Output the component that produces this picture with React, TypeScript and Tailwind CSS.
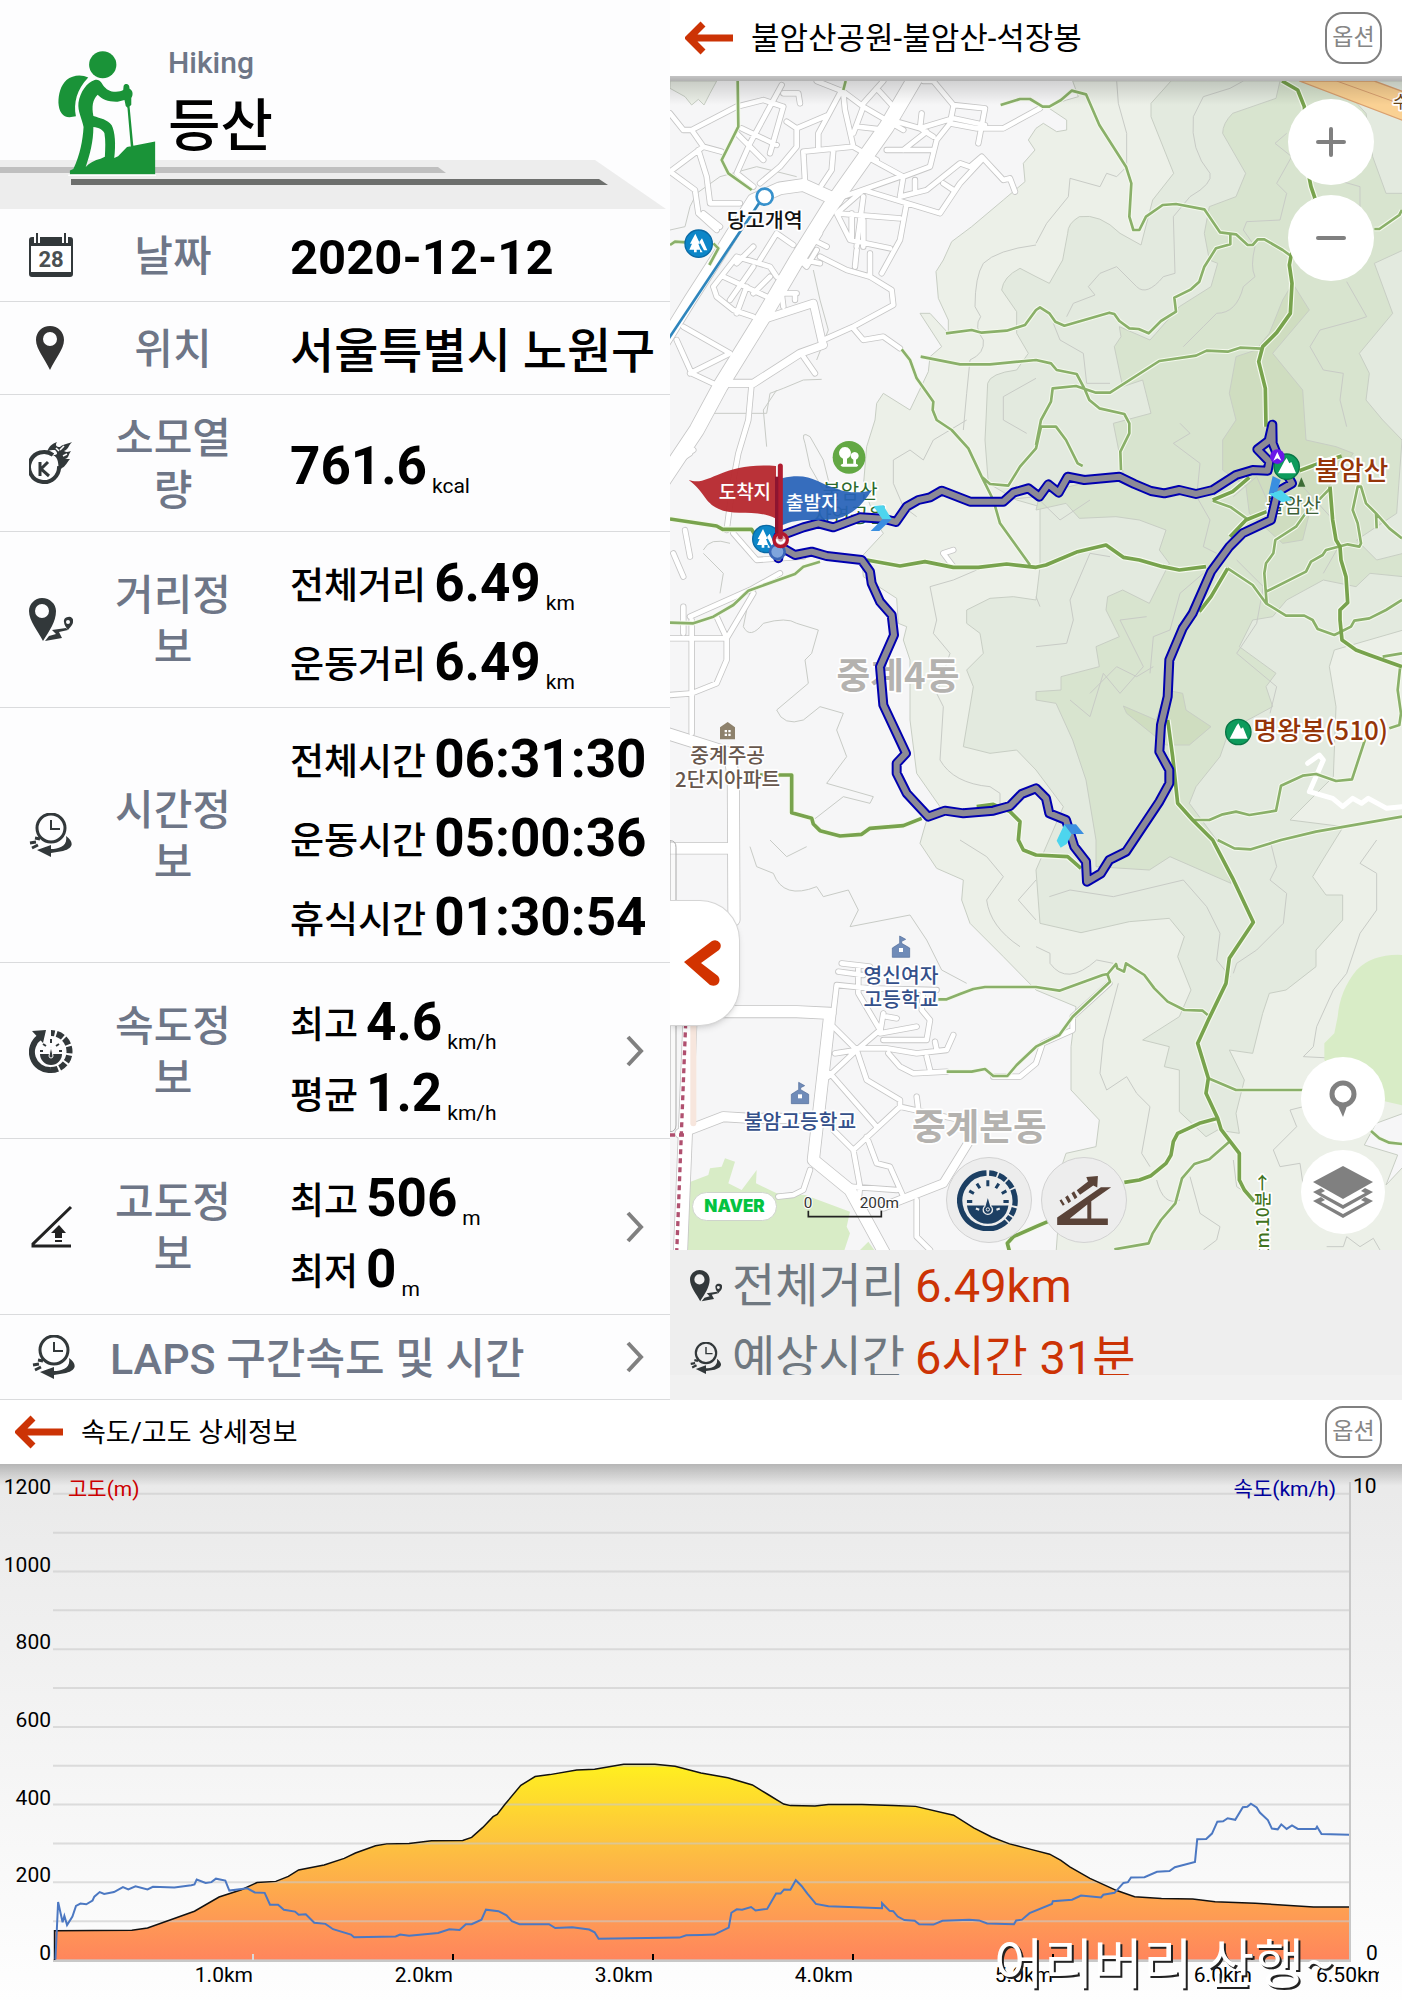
/**
 * Hiking record screen.
 * - Summary table of the workout (left)
 * - Map with the recorded route (right)
 * - Speed / altitude chart (bottom)
 */
import type { ReactNode } from 'react'

interface Measure {
  label?: string
  value: string
  unit?: string
}

const DISTANCE: Measure[] = [
  { label: '전체거리', value: '6.49', unit: 'km' },
  { label: '운동거리', value: '6.49', unit: 'km' },
]

const TIMES: Measure[] = [
  { label: '전체시간', value: '06:31:30' },
  { label: '운동시간', value: '05:00:36' },
  { label: '휴식시간', value: '01:30:54' },
]

const SPEED: Measure[] = [
  { label: '최고', value: '4.6', unit: 'km/h' },
  { label: '평균', value: '1.2', unit: 'km/h' },
]

const ALTITUDE: Measure[] = [
  { label: '최고', value: '506', unit: 'm' },
  { label: '최저', value: '0', unit: 'm' },
]

/* ---------- Icons ---------- */

function HikerIcon() {
  return (
    <svg viewBox="136 150 230 362" preserveAspectRatio="none" className="h-[125px] w-[98px]" fill="#1a9338" aria-hidden="true">
      <ellipse cx="241" cy="190" rx="32" ry="39" />
      <path d="M207 227C192 217 170 219 156 234C142 250 137 275 137 300C138 325 147 342 163 342L178 339C172 300 180 262 207 227Z" />
      <path d="M222 234C204 241 188 268 184 300C182 325 192 345 196 370C194 410 188 450 172 492L164 496V507H364V412L298 428L277 455L268 460C272 420 270 385 262 365C252 348 236 345 219 338C215 312 217 292 229 277C240 291 255 298 276 297L292 292L295 309L299 314L307 428H313L304 311L308 306V286C313 276 312 264 304 259L303 251C300 244 292 244 290 251L289 263C283 268 273 269 262 267C250 263 244 254 238 242C234 234 228 232 222 234ZM219 370C232 372 242 378 245 388C248 410 247 432 246 456L236 462C222 466 209 475 201 486C211 450 219 412 219 370Z" />
      <rect x="160" y="508" width="206" height="4" fill="#fff" />
    </svg>
  )
}

function CalendarIcon() {
  return (
    <svg viewBox="0 0 44 44" className="size-11" aria-hidden="true">
      <rect x="1" y="5" width="42" height="38" rx="2" fill="#fff" stroke="#32383a" strokeWidth="2" />
      <path d="M1 5h42v8H1zM1 39h42v4H1z" fill="#32383a" />
      <path d="M8 1v9M36 1v9" stroke="#fdfdfe" strokeWidth="6" />
      <path d="M8 0v10M36 0v10" stroke="#32383a" strokeWidth="2" />
      <text x="22" y="34" textAnchor="middle" fontSize="22" fontWeight="700" fill="#4a5052">
        28
      </text>
    </svg>
  )
}

function PinIcon() {
  return (
    <svg viewBox="0 0 44 44" className="size-11" aria-hidden="true">
      <path fill="#333" fillRule="evenodd" d="M21 0C13 0 7 6 7 14c0 9 9 19 14 30 5-11 14-21 14-30 0-8-6-14-14-14Zm0 6a7 7 0 1 1 0 14 7 7 0 0 1 0-14Z" />
    </svg>
  )
}

function CalorieIcon() {
  return (
    <svg viewBox="0 0 44 44" className="size-11" aria-hidden="true">
      <path d="M24 14A15 15 0 1 0 30 25" fill="none" stroke="#32383a" strokeWidth="4" />
      <path
        d="M18 11C20 5 23 3 28 1C26 4 27 6 31 6C34 3 38 3 43 1C39 5 40 8 35 10C38 12 41 10 42 10C39 14 40 17 36 18L41 18C38 21 37 25 33 27L30 30C29 23 30 17 24 14C29 14 29 12 26 9C23 9 20 9 18 11Z"
        fill="#32383a"
      />
      <path d="M31 9L35 5M34 15L38 13M27 7l3 3" stroke="#fdfdfe" strokeWidth="1.6" />
      <path d="M11 21v14M19 21l-7 7 8 7" fill="none" stroke="#32383a" strokeWidth="3" />
    </svg>
  )
}

function RouteIcon({ className }: { className: string }) {
  return (
    <svg viewBox="0 0 44 44" className={className} aria-hidden="true">
      <path fill="#32383a" fillRule="evenodd" d="M13 0C6 0 0 6 0 13c0 10 9 20 14 30 6-10 13-19 13-30C27 6 21 0 13 0Zm0 6a7 7 0 1 1 0 14 7 7 0 0 1 0-14Z" />
      <path fill="#32383a" fillRule="evenodd" d="M39 19a4 4 0 0 0-4 5c0 3 2 5 4 8 2-3 5-5 5-8a4 4 0 0 0-5-5Zm0 3a2 2 0 1 1 0 4 2 2 0 0 1 0-4Z" />
      <path d="M16 43L20 38L27 36L23 32L37 30L39 32L30 34L33 40Z" fill="#32383a" />
    </svg>
  )
}

function TimeIcon({ className }: { className: string }) {
  return (
    <svg viewBox="0 0 44 44" className={className} aria-hidden="true">
      <ellipse cx="22" cy="15" rx="14" ry="14" fill="none" stroke="#32383a" strokeWidth="3" />
      <path d="M22 7v9h9" fill="none" stroke="#32383a" strokeWidth="2" />
      <path d="M37 23C45 29 45 35 34 38L22 40V44L8 37L22 32V36C30 36 39 33 37 23Z" fill="#32383a" />
      <path d="M6 25l5 1M1 30l6-1M3 35l6-3" stroke="#32383a" strokeWidth="3" />
    </svg>
  )
}

function SpeedIcon() {
  return (
    <svg viewBox="0 0 44 44" className="size-11" aria-hidden="true">
      <path d="M11 8A18 18 0 0 0 22 41" fill="none" stroke="#32383a" strokeWidth="6" />
      <path d="M22 41A18 18 0 1 0 22 4" fill="none" stroke="#32383a" strokeWidth="6" strokeDasharray="7 2" />
      <path d="M3 2L17 1L14 14Z" fill="#32383a" />
      <path d="M11 25H33A11 11 0 0 1 11 25Z" fill="#32383a" />
      <path d="M11 22h3M30 22h3M14 15l3 2M30 15l-3 2M22 10v4" stroke="#32383a" strokeWidth="2" />
      <path d="M22 17l2 10a2 2 0 1 1-4 0Z" fill="#32383a" stroke="#fdfdfe" />
    </svg>
  )
}

function SlopeIcon() {
  return (
    <svg viewBox="0 0 44 44" className="size-11" aria-hidden="true">
      <path d="M42 2L4 39V41H42" fill="none" stroke="#222" strokeWidth="3" />
      <path d="M30 20l7 8h-4v5h-7v-5h-4zM26 35h7v2h-7z" fill="#222" />
    </svg>
  )
}

function ChevronIcon() {
  return (
    <svg viewBox="0 0 18 32" className="h-8 w-[18px]" aria-hidden="true">
      <path d="M2 2L15 16L2 30" fill="none" stroke="#808080" strokeWidth="4" />
    </svg>
  )
}

function BackArrow() {
  return (
    <svg viewBox="0 0 48 34" className="h-[34px] w-12" aria-hidden="true">
      <path d="M18 3L4 17L18 31M5 17H48" fill="none" stroke="#cc3305" strokeWidth="7" />
    </svg>
  )
}

function GaugeIcon() {
  return (
    <svg viewBox="866 988 190 182" className="h-[61px] w-[63px]" aria-hidden="true">
      <path d="M955 996A84 84 0 1 0 1015 1142" fill="none" stroke="#1c3f63" strokeWidth="16" />
      <path d="M963 996A84 84 0 0 1 1018 1138" fill="none" stroke="#1c3f63" strokeWidth="16" strokeDasharray="24 5 26 5 26 5 50 6" />
      <path d="M896 1094H1021A63 63 0 0 1 896 1094Z" fill="#1c3f63" />
      <path d="M896 1082h16M1006 1082h16M903 1050l14 8M1015 1050l-14 8M926 1028l9 14M992 1028l-9 14M959 1018v18" stroke="#1c3f63" strokeWidth="9" />
      <path d="M959 1064l9 32a14 14 0 1 1-18 0Z" fill="#1c3f63" stroke="#ededed" strokeWidth="4" />
      <circle cx="959" cy="1106" r="5" fill="none" stroke="#ededed" strokeWidth="3" />
      <path d="M923 1103l10 4M995 1103l-10 4" stroke="#ededed" strokeWidth="6" />
    </svg>
  )
}

function InclineIcon() {
  return (
    <svg viewBox="60 990 168 154" className="h-[51px] w-14" fill="#5a4338" aria-hidden="true">
      <path fillRule="evenodd" d="M63 1141V1118L195 1027H226L166 1069V1121H216V1141ZM101 1121H154V1079Z" />
      <path d="M122 1036L156 1010L151 996L186 993L184 1028L172 1022L132 1050ZM106 1045l8-6 10 18-8 6zM87 1057l8-6 10 18-8 6zM70 1067l6-4 10 16-6 4z" />
    </svg>
  )
}

/* ---------- Summary ---------- */

function MeasureLine({ label, value, unit, height }: Measure & { height: string }) {
  return (
    <p className={`flex items-baseline whitespace-nowrap ${height}`}>
      {label && <span className="mr-2 self-start pt-[3px] text-[37px] font-medium">{label}</span>}
      <span className="text-[53px] font-bold">{value}</span>
      {unit && <sub className="bottom-[-9px] ml-[5px] text-[21px] leading-none">{unit}</sub>}
    </p>
  )
}

function Row({
  icon,
  label,
  padding,
  more,
  children,
}: {
  icon: ReactNode
  label: string
  padding: string
  more?: boolean
  children: ReactNode
}) {
  return (
    <div className={`grid grid-cols-[102px_142px_1fr_auto] items-center border-b border-[#dadbdd] ${padding}`}>
      <div className="flex justify-center">{icon}</div>
      <h2 className="pt-[6px] pb-[2px] text-center text-[42px] leading-[52px] font-medium text-[#6e7687]">{label}</h2>
      <div className="min-w-0 pl-[46px] text-black">{children}</div>
      {more && (
        <button type="button" aria-label={`${label} 상세보기`} className="mr-[26px] cursor-pointer">
          <ChevronIcon />
        </button>
      )}
    </div>
  )
}

function Summary() {
  return (
    <section className="bg-[#fdfdfe]">
      <div className="relative h-[209px]">
        <svg viewBox="0 0 670 209" preserveAspectRatio="none" className="absolute inset-0 size-full" aria-hidden="true">
          <path d="M0 160H595L666 209H0Z" fill="#ededed" />
          <path d="M0 167H438L446 173H0Z" fill="#bfbfbf" />
          <path d="M71 179H599L608 185H71Z" fill="#6d6f6d" />
        </svg>
        <div className="relative flex gap-3 pt-[51px] pl-[58px]">
          <HikerIcon />
          <div className="-mt-2">
            <p className="text-[30px] leading-10 font-medium text-[#6e7687]">Hiking</p>
            <h1 className="text-[57px] leading-[88px] font-medium text-black">등산</h1>
          </div>
        </div>
      </div>

      <Row icon={<CalendarIcon />} label="날짜" padding="py-4">
        <p className="pt-[6px] text-[49px] leading-[52px] font-bold">2020-12-12</p>
      </Row>
      <Row icon={<PinIcon />} label="위치" padding="py-4">
        <p className="pt-[8px] text-[48px] leading-[52px] font-medium whitespace-nowrap">서울특별시 노원구</p>
      </Row>
      <Row icon={<CalorieIcon />} label="소모열량" padding="py-3">
        <div className="pt-[6px]">
          <MeasureLine value="761.6" unit="kcal" height="h-[79px] leading-[79px]" />
        </div>
      </Row>
      <Row icon={<RouteIcon className="size-11" />} label="거리정보" padding="py-[5px]">
        <div className="pt-[7px]">
          {DISTANCE.map((m) => (
            <MeasureLine key={m.label} {...m} height="h-[79px] leading-[79px]" />
          ))}
        </div>
      </Row>
      <Row icon={<TimeIcon className="size-11" />} label="시간정보" padding="py-[5px]">
        <div className="pt-[7px]">
          {TIMES.map((m) => (
            <MeasureLine key={m.label} {...m} height="h-[79px] leading-[79px]" />
          ))}
        </div>
      </Row>
      <Row icon={<SpeedIcon />} label="속도정보" padding="py-[9px]" more>
        <div className="pt-[15px]">
          {SPEED.map((m) => (
            <MeasureLine key={m.label} {...m} height="h-[71px] leading-[71px]" />
          ))}
        </div>
      </Row>
      <Row icon={<SlopeIcon />} label="고도정보" padding="py-[9px]" more>
        <div className="pt-[15px]">
          {ALTITUDE.map((m) => (
            <MeasureLine key={m.label} {...m} height="h-[71px] leading-[71px]" />
          ))}
        </div>
      </Row>
      <button
        type="button"
        className="flex w-full cursor-pointer items-center border-b border-[#dadbdd] py-[14px] pr-[26px] pl-8 text-left"
      >
        <TimeIcon className="size-11" />
        <span className="ml-[34px] flex-1 pt-1 text-[43px] leading-[52px] font-medium whitespace-nowrap text-[#6e7687]">
          LAPS 구간속도 및 시간
        </span>
        <ChevronIcon />
      </button>
    </section>
  )
}

/* ---------- Map ---------- */

const ROADS: { d: string; w: number }[] = [
  { w: 44, d: 'M750 210L650 380L480 620L380 780L280 950L150 1160L80 1290L-20 1440' },
  { w: 36, d: 'M500 600L400 555L330 565L250 600L150 760L60 900L-20 1030' },
  { w: 34, d: 'M-10 2200L180 2260L190 2340L192 2760' },
  { w: 32, d: 'M0 2545H190' },
  { w: 34, d: 'M150 3035H380L480 3040L430 3480L540 3570L660 3790' },
  { w: 40, d: 'M60 3060L30 3790' },
  { w: 28, d: 'M30 3400L160 3350L240 3355H430' },
  { w: 24, d: 'M640 3620L820 3550L900 3420' },
  {
    w: 14,
    d:
      'M0 340L40 390H65L100 440L0 515M65 390L200 320L280 300L340 320M100 440L155 455M85 450L110 530L120 610H210' +
      'M0 515L75 570L85 640L140 690M100 640L150 680M335 255L240 430L200 520L250 560M340 280H385L390 310M340 320L300 460' +
      'M200 400L280 480M215 385L320 435M350 365L380 385V440L330 500L270 550M380 385L475 345L515 270M475 345L445 400V450' +
      'M400 455L550 440L620 480M550 440L525 330L520 280M440 243L520 275L580 320L700 390M580 320L550 400M620 265L670 320M640 243L580 310' +
      'M680 365L750 385L850 355L945 375M755 340L750 385L790 410M760 243H790L850 315L945 325L925 430M850 320L840 370L800 420L780 500L700 530' +
      'M840 370L920 385H1000L1110 325M560 380L650 390M650 450H790M770 395L700 450M590 470L700 530L690 590M520 590L690 530' +
      'M490 450L485 510L455 555M400 455L405 545M500 640L580 570L810 640L870 550L935 480M690 590L770 570L870 490L900 500L935 470L1000 540L1020 535L1035 575' +
      'M735 540V570M820 550L850 570M580 590L560 740M500 640L690 655M500 640L540 720L660 745M545 640V720M580 660V740M560 750L555 800M600 760V830' +
      'M710 610L690 720L635 820M450 700L400 780L450 790M380 770L410 800L440 750M430 720L470 740M320 700L270 780M320 700L370 735' +
      'M450 770L530 810L600 830L665 870L670 915L550 980L460 1020M130 860L200 770L300 800L320 830M250 740L200 790M130 860L140 890L190 930L250 950' +
      'M160 830L290 890M180 900L250 800M230 860L200 940M300 830L250 880M330 880H380M340 920L335 880M375 900V880' +
      'M40 980L180 1060M20 1020L65 1120L150 1160M60 1120L180 1060M400 1070L435 1120M245 1150L235 1260L205 1360L190 1440L170 1590' +
      'M550 985L580 1020L640 1010L690 1045M0 1400L60 1360M20 1380L70 1350M10 1660L40 1730M45 1590L60 1670M65 1860V2200' +
      'M0 1915H170M250 1780L170 1915V1980L140 2050L65 2080L0 2085M140 1850L170 1915M60 1850L240 1770L330 1720M40 1820V1900M190 1600L260 1680L400 1670' +
      'M820 1660L850 1700M820 1660L850 1650' +
      'M490 3040L500 2955L600 2965L800 2970M515 2890L600 2900M505 2915L580 2925M565 2900V2980L630 3090L560 3150L475 3230' +
      'M640 3040L630 3100L740 3080M650 3050L680 3055M560 3145H650L740 3160L830 3150L850 3105M495 3160L560 3150M490 3080L560 3150L590 3240L690 3300V3320L550 3450L490 3390' +
      'M480 3220L620 3380M640 3120H770L780 3060L755 3030L760 2970M655 3160L690 3200L730 3220L830 3215M770 3170L780 3210M795 3125L800 3150' +
      'M740 3290L745 3330M690 3320L870 3360M590 3410L620 3490L660 3500L700 3590M550 3450L570 3560L565 3610M540 3560L680 3570' +
      'M740 3600V3710L780 3750M325 3590L370 3585L400 3570L420 3510M970 3230H1050L1098 3190L1118 3130L1208 3090V3050L1318 2950',
  },
  { w: 22, d: 'M275 960L430 910L455 1020L460 1035L390 1060L250 1150L165 1150' },
]

const CONTOURS =
  'M0 690L45 680L60 620L80 580L150 530L260 500L380 530M0 1390L100 1240L290 1240L300 1180L340 1165L400 1140L455 1138M290 1340L280 1230L320 1170M430 810L450 900L475 990L440 1080' +
  'M1098 735Q980 750 940 790Q915 830 915 920L932 950Q910 980 940 1020Q945 1060 900 1080L890 1180L880 1290' +
  'M1098 1135L1000 1190V1260L1070 1300M1340 243L1345 310L1370 400L1370 500L1340 530L1310 520L1290 560L1200 535L1195 590L1130 670L1098 730' +
  'M1720 243L1680 265L1600 290L1570 350Q1560 450 1620 520Q1630 550 1560 590L1510 650L1515 820L1480 830Q1430 890 1400 860L1340 800L1290 820L1255 860L1275 885L1210 910L1190 950' +
  'M1850 400L1815 430L1865 470L1820 550L1850 580L1830 660L1730 665L1720 690L1755 740Q1740 800 1755 830L1720 860Q1700 940 1640 940L1600 980L1540 1040' +
  'M1150 970L1170 1020L1240 1060L1250 1150L1320 1150M1000 1500L1098 1490L1170 1560L1260 1500M1530 1270L1560 1300L1510 1330L1590 1390L1580 1490L1620 1560L1600 1640L1640 1660' +
  'M2030 845L2090 950L2060 960L1950 990L1920 1040L1960 1110L2020 1120L2010 1200L2030 1280M2000 540L2070 560L2070 640M1430 1850L1350 1860L1420 2000L1350 2080L1300 2020L1260 2150L1200 2100' +
  'M1700 1680L1780 1760L1760 1870L1700 1960L1820 2060L1800 2140M1690 1490L1760 1430L1800 1520M1880 1440L1990 1560L2000 1650L1960 1720' +
  'M405 1330Q390 1290 420 1310L460 1380L500 1540L420 1400ZM670 1380L720 1350L760 1380L790 1320L890 1260M670 1380V1450L700 1520L740 1550M100 1650Q120 1610 180 1630' +
  'M150 1780L160 1720L100 1660M240 1780L220 1880Q240 1920 280 1870Q350 1850 380 1870L445 1890L425 1960L405 1980L415 2050L320 2130Q340 2180 400 2160L450 2120L520 2140L500 2190L530 2270L470 2350L610 2390L600 2410L520 2390L430 2460' +
  'M780 1760L850 1740L920 1710M780 1760L800 1860L790 1900L840 1960L800 2080L820 2120L810 2280Q850 2350 960 2360L990 2380V2440M240 2540L260 2600L310 2620Q340 2700 440 2660L460 2690L535 2670L565 2730L540 2780L720 2745L770 2820L815 2910L890 2950' +
  'M300 2520L350 2570L410 2540M870 2520L950 2570L1000 2630L950 2700Q960 2780 1050 2840M1098 2640L1045 2700L1098 2760' +
  'M1138 2690L1200 2670L1330 2690L1540 2640L1610 2720L1650 2800L1640 2880L1680 2930M1098 2840L1140 2860V2890Q1190 2960 1280 2880L1330 2890M1345 2950L1300 3120L1290 3220L1310 3270L1370 3230L1400 3280L1440 3320L1415 3460L1440 3500' +
  'M1800 2520L1820 2600L1800 2640L1850 2680L1840 2770L1760 2850L1700 2890L1690 2920M2120 2520L2070 2590L2120 2620V2730L2070 2800L2030 2920L1990 2970L1940 3080L1930 3140L1900 3170L2000 3175' +
  'M1900 3320L1860 3330L1880 3380L1810 3450L1830 3500L1890 3490L1900 3560M1460 3540Q1480 3620 1530 3600M1560 3530L1590 3640L1650 3680L1640 3720L1600 3750M1690 3480L1700 3560L1760 3600M1970 3740L2020 3740L2030 3710L2070 3740L2110 3715L2130 3750' +
  'M1098 1790L1110 1820M1098 1940L1190 1930L1210 1860L1200 1800L1260 1660L1320 1670M1440 2020L1450 1910L1500 1890L1530 1780L1600 1720M1260 2080L1340 2000L1400 2030L1450 2000'

const TRAILS =
  'M203 243L205 380L155 480L175 520L245 570M0 735L15 725L60 728M130 730L145 745L118 795M520 270L527 243' +
  'M992 315L1050 297H1080L1118 320H1138L1173 300L1205 272L1248 283L1288 375L1368 500L1384 550L1378 650L1390 690H1408L1428 650L1478 615L1518 612L1603 628L1650 697L1698 703L1733 735H1748L1763 718H1783L1838 750L1863 768' +
  'M1681 700V733L1638 745L1603 800L1588 845L1563 868L1513 893L1518 935L1473 963L1436 1000L1406 987L1378 985L1348 963L1333 942L1318 938L1183 977L1156 965L1138 940L1110 922L1098 930L1065 975L1010 992L935 998L905 990L828 1000' +
  'M752 1070L870 1093H960L1098 1080L1143 1090L1160 1110L1220 1122L1243 1165L1258 1200L1288 1225L1363 1242L1378 1270V1300L1351 1355L1353 1410' +
  'M1098 1335L1113 1260L1143 1205L1148 1165L1218 1158L1278 1178H1320L1468 1083L1578 1067L1610 1052L1673 1055L1710 1043L1773 1046' +
  'M695 1048L720 1080L740 1135L790 1205L788 1230L800 1260L845 1290L895 1345L935 1430L970 1500L990 1570L1080 1695M935 1430L960 1452L1015 1457L1050 1400L1098 1345L1113 1280H1158L1188 1320L1223 1390L1238 1398' +
  'M0 1868L70 1870L130 1850L190 1815L235 1772L375 1722L400 1700L450 1685' +
  'M805 2998H830L870 2982L910 2967L945 2961H1098L1168 2972L1298 2925L1313 2922L1338 2892L1342 2905L1362 2915L1368 2890L1423 2925L1453 2965L1493 3005L1543 3030L1598 3032L1613 3045' +
  'M1313 2925L1320 2945L1208 3050L1168 3105L1098 3140L1040 3195L1012 3228H970L945 3207L905 3215H830' +
  'M1678 3425L1618 3478L1573 3492L1536 3535L1516 3610L1473 3660L1448 3700L1436 3730L1333 3748M1615 3235L1698 3270H1900' +
  'M1643 2520L1693 2545L1743 2548L1833 2520L1938 2495L2196 2450M2103 3393L2128 3415L2158 3428L2196 3432' +
  'M1568 2460H1618L1658 2443L1698 2435L1738 2445L1818 2432L1833 2357L1898 2327L1938 2322L1998 2343L2046 2338L2088 2210M2158 2185L2188 2175L2193 2140L2183 2070L2190 2005' +
  'M1673 1705L1748 1755L1788 1810L1848 1847H1903L1928 1860L1943 1887L1993 1905L2043 1880L2053 1862L2098 1855L2148 1830L2196 1800' +
  'M1788 1775L1908 1715L1923 1685L1958 1665L1968 1650L2033 1633L2068 1640L2073 1630L2063 1570L2048 1530L2063 1460H2073L2088 1510L2118 1540L2158 1585L2196 1615M2118 1540L2120 1585' +
  'M1790 1810L1783 1720L1788 1690L1810 1660L1816 1620L1878 1580L1903 1545L1980 1465M1628 1502L1683 1522L1733 1558M2138 1970L2196 1960M2113 687H2128L2188 645L2196 630'

const MAIN_TRAILS =
  'M0 1557L140 1578L158 1588H245L255 1605M590 1680L690 1698L765 1685L850 1702H925L1010 1692L1098 1702L1128 1695L1223 1655L1308 1635L1360 1672L1408 1680L1478 1700L1528 1710L1608 1700' +
  'M270 2325H365V2438L425 2455L430 2472L450 2492L510 2508L575 2503L600 2485L700 2477L755 2455M920 2420L970 2413L1020 2435L1050 2465L1045 2520L1060 2550L1098 2565L1193 2570L1233 2605' +
  'M1493 2160L1508 2270L1523 2410L1568 2460L1628 2520L1688 2635L1750 2767L1678 2875L1668 2950L1615 3060L1583 3130L1615 3235L1608 3280L1643 3355L1653 3388L1708 3460V3540L1723 3570L1753 3605' +
  'M1643 3355L1588 3370L1523 3400L1510 3425L1503 3465L1488 3490L1443 3527L1408 3540L1363 3547M1020 3760L1012 3730L1030 3710L1098 3680L1140 3662' +
  'M1836 243L1883 270L1903 320L1918 535L1923 560L1935 595L1863 768L1858 795L1866 850L1861 940L1820 998L1778 1040L1766 1085L1786 1165L1788 1280' +
  'M1980 1460L1988 1560L1998 1620L2010 1640L2013 1680L2028 1730L2033 1808L2010 1830V1860L2016 1920L2058 1950L2098 1965L2196 2000' +
  'M1888 1412L1948 1390L2015 1368M1628 1500L1688 1475L1738 1432M1790 1535L1728 1560L1680 1610M1673 1705L1623 1790L1588 1835'

const ROUTE =
  'M325 1675V1610L400 1582L445 1570L490 1582L570 1552L640 1556L678 1566L710 1520L745 1500L780 1492L815 1472L900 1505H1000L1030 1478L1075 1465L1108 1490L1135 1453L1166 1478L1193 1430L1243 1440L1348 1430L1393 1452L1443 1473L1483 1480L1528 1470L1578 1482L1628 1470L1698 1425L1748 1410L1793 1412L1798 1385L1762 1348L1796 1322L1807 1274L1808 1330L1828 1380' +
  'L1866 1450L1823 1475L1803 1560L1718 1600L1678 1640L1623 1715L1568 1840L1538 1885L1498 1980L1493 2090L1473 2175L1468 2255L1498 2310V2350L1468 2405L1398 2510L1368 2555L1318 2580L1293 2620L1251 2645L1248 2585L1213 2540L1188 2460L1138 2440L1128 2395L1098 2365L1055 2382L1020 2418L970 2432L880 2440L825 2432L775 2450L710 2380L680 2320V2290L708 2260L640 2115L630 2000L672 1905L665 1845L630 1805L605 1750L600 1715L575 1680L470 1668L425 1655L375 1665L340 1645'

function TreeMarker({ x, y }: { x: number; y: number }) {
  return (
    <g transform={`translate(${x} ${y})`}>
      <circle r="41" fill="#0c86c8" stroke="#0a69a4" strokeWidth="4" />
      <path d="M-10-30L-26 0H-20L-28 18H-14V26H-6V18H6L-1 0H4ZM10-16L2-6L16 20H26ZM4 14v12h8z" fill="#fff" />
    </g>
  )
}

function PeakMarker({ x, y }: { x: number; y: number }) {
  return (
    <g transform={`translate(${x} ${y})`}>
      <circle r="38" fill="#0d9b5c" stroke="#087545" strokeWidth="4" />
      <path d="M-26 20L-6-18L0-26L8-10L14-14L28 20Z" fill="#fff" />
    </g>
  )
}

function SchoolMarker({ x, y }: { x: number; y: number }) {
  return (
    <g transform={`translate(${x} ${y})`}>
      <path d="M-26 30V2L-4-12V-34L14-24L2-18V-12L26 2V30Z" fill="#6f8bb8" stroke="#4f6a98" strokeWidth="2" />
      <rect x="-6" y="2" width="12" height="12" fill="#fff" />
    </g>
  )
}

function MapCanvas() {
  return (
    <svg
      viewBox="0 243 2196 3507"
      preserveAspectRatio="xMidYMid slice"
      className="absolute inset-0 size-full font-['Noto_Sans_CJK_KR',sans-serif]"
      role="img"
      aria-label="불암산 등산 경로 지도"
    >
      <rect y="243" width="2196" height="3507" fill="#f6f6f7" />

      {/* Terrain, from the foot of the mountain up */}
      <g stroke="#c8cec4" strokeWidth="3" strokeLinejoin="round">
        <path d="M0 243H140L120 280L102 315L85 298L65 315L45 290L0 265Z" fill="#ecf0e8" />
        <path
          d="M1208 243L1225 290L1190 300L1130 320L1190 360V390L1160 395L1120 370L1098 385L1075 420L1095 450L1060 490L1065 545L1000 600L905 680L845 725L820 780L798 815L805 895L835 960V1000L780 940L750 940L815 1040L780 1070L775 1115L720 1230L640 1180L620 1210L615 1260L590 1340L580 1460L620 1570L640 1600L575 1670L580 1730L680 1795L685 1870L710 1880L700 1920L720 1980V2160L740 2320L810 2420L770 2460L750 2530L800 2605L880 2640L875 2700L900 2770L1000 2870L1098 2970L1218 3020L1203 3140V3270L1288 3360L1278 3440L1188 3460L1178 3490L1158 3760H2200V243Z"
          fill="#ecf0e8"
        />
        <path
          d="M1503 243L1443 310V350L1511 520L1448 600L1413 735L1350 700Q1290 640 1228 650Q1193 670 1193 700L1178 780L1138 850L1098 830L1050 805Q1000 830 995 870L1040 935L1040 1000L1075 1060L1040 1110Q960 1120 953 1150L948 1260L945 1320L955 1450L1040 1500L1110 1520V1700L1098 1800L1030 1790L960 1795L890 1830V1870L930 1900L940 1960L890 2010L910 2060L880 2240L960 2260L1040 2250L1098 2310L1180 2420L1098 2610L1110 2770L1233 2798L1378 2765L1498 2755L1543 2810L1523 2870L1563 2970L1528 3050L1418 3120L1498 3140L1483 3200L1528 3210V3335L1608 3410L1643 3390L1708 3400L1698 3340L1723 3240L1678 3150L1748 3160L1778 3040L1798 2980L1848 2970L1938 2900V2850L2018 2760V2685H1968L1928 2630L1958 2580L2020 2480L1860 2460L1990 2330L1998 2120L1978 2000L1993 1950L2200 1890V243Z"
          fill="#e3eadf"
        />
        <path
          d="M1830 243L1818 295L1688 340Q1658 370 1658 400L1727 520L1698 590L1618 620L1603 700L1618 780L1643 790L1623 860L1528 920L1458 1000L1440 1020L1348 980L1353 1010L1333 1040L1358 1160L1418 1140L1443 1240L1330 1270L1360 1420L1240 1450L1110 1480L1098 1530L1188 1510L1228 1555L1338 1550L1408 1560L1488 1590L1468 1650L1498 1690L1438 1810L1358 1770L1313 1790L1308 1830L1348 1910L1278 1940L1288 2000L1173 2030V2070L1098 2075V2100L1158 2110L1208 2220L1248 2340L1278 2520V2600L1438 2610L1500 2570L1683 2650L1640 2520L1558 2410L1578 2360L1650 2270L1678 2190L1808 2120L1788 2060L1818 2020L1708 1940L1748 1860L1808 1850L1850 1800L1960 1740L2058 1760L2100 1720L2200 1730V1660L2120 1680L2060 1620L2180 1540L2196 1320L2138 1260L2088 1200L2098 1120L2068 1060L2168 940L2113 790L2200 750V580H2148L2108 470L2088 340L2000 243Z"
          fill="#d8e4cf"
        />
        <path
          d="M1868 850L1918 930L1808 1060L1898 1170L1908 1320L1998 1340L2050 1360L1918 1540L1898 1620L1838 1630L1738 1540L1728 1460L1658 1410V1320L1698 1260L1678 1180L1698 1070L1758 1050L1798 1000L1838 900Z"
          fill="#cfddc0"
        />
        <path d="M1360 2118L1458 2160L1488 2070L1538 2080L1548 2130L1623 2180L1558 2235H1488L1370 2140Z" fill="#cfddc0" />
        <path d="M2200 3340L2118 3370L2083 3435L2183 3465L2148 3555L2200 3500Z" fill="#f6f6f7" />
      </g>
      <path d={CONTOURS} fill="none" stroke="#c8cbc6" strokeWidth="3" strokeLinejoin="round" />
      <path d="M2200 2865Q2110 2860 2060 2910Q2010 2970 2003 3050L1993 3100L1963 3130V3180L2040 3280L2200 3317Z" fill="#d8ecc6" />
      <path d="M50 3550L115 3525L120 3505L155 3500L165 3475L195 3485L175 3550L215 3570L260 3510L258 3550L320 3580L405 3585L540 3635L530 3680L540 3700L520 3760H30ZM560 3760L595 3725L620 3760Z" fill="#d8ecc6" />

      {/* Roads */}
      <g fill="none" strokeLinejoin="round" strokeLinecap="round">
        {ROADS.map(({ d, w }) => (
          <path key={d} d={d} stroke="#c6c6c6" strokeWidth={w + 5} />
        ))}
        {ROADS.map(({ d, w }) => (
          <path key={d} d={d} stroke="#fff" strokeWidth={w} />
        ))}
        <path d="M1913 2290L1948 2265L1960 2280L1918 2375L1988 2395L2018 2420L2048 2395L2075 2410L2095 2395L2150 2425L2196 2420" stroke="#fff" strokeWidth="15" />
        <path d="M70 3080V3370" stroke="#f7e6dd" strokeWidth="18" />
      </g>
      <path d="M1888 243L2200 362V275L2113 243Z" fill="#fad193" stroke="#d9a070" strokeWidth="4" />
      <path d="M2000 243L2200 315" stroke="#d9a070" strokeWidth="3" />

      {/* Trails */}
      <g fill="none" strokeLinejoin="round">
        <path d={TRAILS} stroke="#f4f9ed" strokeWidth="14" />
        <path d={MAIN_TRAILS} stroke="#f4f9ed" strokeWidth="18" />
        <path d={TRAILS} stroke="#8ab069" strokeWidth="8" />
        <path d={MAIN_TRAILS} stroke="#78a34d" strokeWidth="11" />
      </g>

      {/* Railways */}
      <path d="M270 605L-10 1025" stroke="#2f86bd" strokeWidth="8" />
      <circle cx="284" cy="590" r="24" fill="#fff" stroke="#3791cc" strokeWidth="8" />
      <path d="M47 3070L20 3760" stroke="#b0506f" strokeWidth="10" strokeDasharray="15 12" />
      <path d="M0 3405H45" stroke="#b0506f" strokeWidth="10" strokeDasharray="15 12" />

      {/* Place names */}
      <g stroke="#fff" strokeWidth="10" strokeLinejoin="round" paintOrder="stroke">
        <text x="170" y="684" fontSize="62" fontWeight="500" fill="#111">당고개역</text>
        <text x="2168" y="325" fontSize="52" fill="#6b4415">수</text>
        <g textAnchor="middle">
          <g fontSize="110" fontWeight="700" fill="#b4b2af">
            <text x="684" y="2067">중계4동</text>
            <text x="928" y="3420">중계본동</text>
          </g>
          <g fontSize="61" fontWeight="500" fill="#67574d">
            <text x="173" y="2288">중계주공</text>
            <text x="173" y="2360">2단지아파트</text>
          </g>
          <g fontSize="61" fontWeight="500" fill="#34508a">
            <text x="693" y="2950">영신여자</text>
            <text x="693" y="3022">고등학교</text>
            <text x="390" y="3386">불암고등학교</text>
          </g>
          <g fontSize="60" fill="#2c6a2c">
            <text x="540" y="1496">불암산</text>
            <text x="540" y="1568">자연공원</text>
            <text x="1870" y="1540" fill="#3c5f38">불암산</text>
          </g>
        </g>
        <text transform="translate(1798 3522) rotate(-90)" textAnchor="end" fontSize="52" fontWeight="500" fill="#3f7320">
          km.10분→
        </text>
      </g>
      <path d="M150 2182L173 2166L195 2182V2218H150Z" fill="#8d816c" />
      <path d="M164 2190h7v7h-7zM175 2190h7v7h-7zM164 2201h7v7h-7zM175 2201h7v7h-7z" fill="#fff" />
      <SchoolMarker x={693} y={2842} />
      <SchoolMarker x={390} y={3281} />
      <TreeMarker x={86} y={731} />
      <TreeMarker x={289} y={1617} />
      <circle cx="537" cy="1372" r="49" fill="#63a844" />
      <path d="M519 1391V1376A18 18 0 1 1 531 1376V1391H550V1379A12 12 0 1 1 558 1379V1391Q570 1395 560 1400H518Q505 1395 519 1391Z" fill="#fff" />
      <path d="M1883 1460L1894 1432L1906 1460Z" fill="#3c6b35" />

      {/* Recorded route */}
      <g fill="none" strokeLinejoin="round">
        <path d={ROUTE} stroke="#0000b0" strokeWidth="30" strokeLinecap="round" />
        <path d={ROUTE} stroke="#8c8a95" strokeWidth="18" strokeLinecap="round" />
      </g>
      {/* Direction of travel */}
      <g fill="#4dd5ee">
        <path d="M610 1518L640 1516L665 1558H637Z" />
        <path d="M1796 1482L1833 1470L1868 1500L1836 1507Z" />
        <path d="M1183 2473L1205 2502L1190 2532L1172 2543L1160 2522Z" />
      </g>
      <g fill="#3b8fe0">
        <path d="M637 1558H665L628 1593H602Z" />
        <path d="M1808 1428L1832 1440L1822 1474L1796 1482Z" />
        <path d="M1183 2473H1218L1242 2502H1205Z" />
      </g>
      <PeakMarker x={1850} y={1400} />
      <PeakMarker x={1705} y={2196} />
      <circle cx="1822" cy="1370" r="22" fill="#6b16e8" />
      <path d="M1822 1356L1834 1382L1822 1375L1810 1382Z" fill="#fff" />
      <g stroke="#fff" strokeWidth="12" strokeLinejoin="round" paintOrder="stroke" fontWeight="500" fill="#953509">
        <text x="1934" y="1441" fontSize="80">불암산</text>
        <text x="1750" y="2220" fontSize="78">명왕봉(510)</text>
      </g>

      {/* Start and finish flags */}
      <circle cx="322" cy="1655" r="22" fill="#7fa5dc" stroke="#3a66b8" strokeWidth="8" />
      <path d="M336 1435C420 1415 440 1450 500 1466C540 1482 580 1478 606 1470C580 1510 550 1545 500 1556C440 1565 390 1550 336 1576Z" fill="#2762b8" fillOpacity="0.93" />
      <path d="M56 1440C120 1462 150 1385 318 1398V1556C260 1525 190 1550 145 1526C105 1510 100 1470 56 1440Z" fill="#b72a30" fillOpacity="0.96" />
      <circle cx="332" cy="1620" r="20" fill="#d7a3a8" stroke="#b3152b" strokeWidth="10" />
      <path d="M321 1618a11 11 0 0 0 22 0" fill="none" stroke="#fff" strokeWidth="7" />
      <path d="M331 1398V1610" stroke="#b01c30" strokeWidth="15" strokeLinecap="round" />
      <path d="M320 1430V1600" stroke="#8d1430" strokeWidth="10" />
      <g fontSize="57" fontWeight="500" fill="#fff">
        <text x="146" y="1496">도착지</text>
        <text x="348" y="1530">출발지</text>
      </g>

      {/* Scale bar */}
      <path d="M415 3632V3650H634V3632" fill="none" stroke="#222" strokeWidth="5" />
      <g fontSize="46" textAnchor="middle" fill="#333" stroke="#fff" strokeWidth="6" paintOrder="stroke" className="font-[Roboto,sans-serif]">
        <text x="414" y="3625">0</text>
        <text x="628" y="3625">200m</text>
      </g>
      <path d="M0 2522Q18 2522 18 2542V3375Q18 3395 0 3395Z" fill="#fff" fillOpacity="0.3" stroke="#a9a9a9" strokeWidth="3" />
    </svg>
  )
}

function TitleBar({ title, size, height }: { title: string; size: string; height: string }) {
  return (
    <header className={`flex items-center justify-between bg-white pl-[15px] ${height}`}>
      <div className="flex items-center gap-[18px]">
        <button type="button" aria-label="뒤로" className="cursor-pointer">
          <BackArrow />
        </button>
        <h2 className={`pt-[2px] text-black ${size}`}>{title}</h2>
      </div>
      <button
        type="button"
        className="mr-5 h-[52px] w-[57px] cursor-pointer rounded-[18px] border-2 border-[#808080] text-center text-[23px] text-[#868686]"
      >
        옵션
      </button>
    </header>
  )
}

function MapPanel() {
  return (
    <section className="flex flex-col bg-[#f1f1f1]">
      <TitleBar title="불암산공원-불암산-석장봉" size="text-[31px]" height="h-[76px]" />
      <div className="h-[5px] bg-linear-to-b from-[#c4c4c4] to-[#b0b0b0]" />
      <div className="relative aspect-[732/1169] overflow-hidden">
        <MapCanvas />
        <div className="absolute inset-x-0 top-0 h-6 bg-linear-to-b from-black/15 to-transparent" />

        <div className="absolute top-[18px] right-7 flex flex-col gap-[10px]">
          <button type="button" aria-label="확대" className="flex size-[86px] cursor-pointer items-center justify-center rounded-full bg-white">
            <svg viewBox="0 0 30 30" className="size-[30px]">
              <path d="M15 2V28M2 15H28" stroke="#808080" strokeWidth="4" strokeLinecap="round" />
            </svg>
          </button>
          <button type="button" aria-label="축소" className="flex size-[86px] cursor-pointer items-center justify-center rounded-full bg-white">
            <svg viewBox="0 0 30 30" className="size-[30px]">
              <path d="M2 15H28" stroke="#808080" strokeWidth="4" strokeLinecap="round" />
            </svg>
          </button>
        </div>

        <div className="absolute right-[17px] bottom-4 flex flex-col gap-[9px]">
          <button type="button" aria-label="현재 위치" className="flex size-[84px] cursor-pointer items-center justify-center rounded-full bg-white">
            <svg viewBox="0 0 28 38" className="h-[38px] w-7">
              <path d="M9 26L14 37L18 26Z" fill="#808080" />
              <circle cx="14" cy="14" r="11" fill="#fff" stroke="#808080" strokeWidth="5" />
            </svg>
          </button>
          <button type="button" aria-label="지도 종류" className="flex size-[84px] cursor-pointer items-center justify-center rounded-full bg-white">
            <svg viewBox="0 0 60 52" className="h-[52px] w-[60px]">
              <path d="M30 0L60 16L30 33L0 16Z" fill="#808080" />
              <path d="M8 22L0 26L30 43L60 26L52 22L48 25L52 27L30 39L8 27L12 25ZM8 31L0 35L30 52L60 35L52 31L48 34L52 36L30 48L8 36L12 34Z" fill="#808080" />
            </svg>
          </button>
        </div>

        <div className="absolute inset-x-0 bottom-[7px] flex justify-center gap-[9px]">
          <button type="button" aria-label="속도" className="flex size-[86px] cursor-pointer items-center justify-center rounded-full border border-[#d2d2d2] bg-[#ededed]">
            <GaugeIcon />
          </button>
          <button type="button" aria-label="경사" className="flex size-[86px] cursor-pointer items-center justify-center rounded-full border border-[#d2d2d2] bg-[#ededed]">
            <InclineIcon />
          </button>
        </div>

        <button
          type="button"
          aria-label="목록 열기"
          className="absolute bottom-[224px] left-0 h-[126px] w-[70px] cursor-pointer rounded-r-[40px] border border-l-0 border-[#d5d5d5] bg-white pl-[14px] shadow-md"
        >
          <svg viewBox="0 0 38 46" className="h-[46px] w-[38px]">
            <path d="M0 22L28 1Q33-1 36 3Q38 7 35 10L17 23L34 36Q37 40 34 44Q31 47 26 45Z" fill="#d23300" />
          </svg>
        </button>

        <span className="absolute bottom-[29px] left-[22px] flex h-[29px] w-[85px] items-center justify-center rounded-full border border-[#cfd4cc] bg-white font-[Inter,sans-serif] text-[17px] font-black text-[#04c341]">
          NAVER
        </span>
      </div>

      <div className="h-[125px] overflow-hidden bg-[#eeeeee] pl-5 text-[47px] leading-[72px] whitespace-nowrap">
        <p className="flex h-[72px] items-center">
          <RouteIcon className="mr-[10px] size-8" />
          <span className="text-[#6f7880]">전체거리</span>
          <span className="ml-[10px] text-[#cc3305]">6.49km</span>
        </p>
        <p className="flex h-[72px] items-center">
          <TimeIcon className="mr-[10px] size-8" />
          <span className="text-[#6f7880]">예상시간</span>
          <span className="ml-[10px] text-[#cc3305]">6시간 31분</span>
        </p>
      </div>
    </section>
  )
}

/* ---------- Chart ---------- */

const ELEVATION =
  '122,1387 295,1386 330,1380 385,1357 435,1336 490,1299 540,1280 575,1261 617,1258 645,1245 668,1228 725,1215 770,1198 795,1184 840,1165 865,1160 915,1159 965,1152 1035,1151 1055,1143 1080,1117 1103,1089 1112,1083 1130,1056 1165,1007 1197,984 1230,979 1290,967 1330,965 1395,952 1465,952 1510,957 1568,975 ' +
  '1628,987 1683,1006 1718,1031 1753,1056 1768,1060 1823,1061 1853,1057 1928,1057 1998,1060 2048,1062 2133,1085 2178,1118 2218,1142 2258,1160 2308,1175 2348,1187 2373,1203 2393,1220 2438,1250 2498,1282 2538,1298 2598,1303 2668,1304 2718,1311 2808,1315 2938,1325 3018,1325'

const SPEED_LINE =
  '124,1462 130,1312 140,1365 144,1348 150,1372 162,1350 170,1322 180,1316 193,1318 207,1308 211,1298 223,1286 233,1291 255,1286 275,1273 287,1279 303,1271 330,1279 342,1272 390,1274 428,1268 435,1266 440,1253 460,1262 473,1260 483,1251 504,1256 513,1282 553,1276 570,1287 592,1288 604,1319 622,1319 635,1332 660,1337 668,1345 684,1344 703,1366 728,1369 745,1383 785,1397 792,1404 885,1402 895,1397 915,1400 980,1393 1005,1383 1028,1385 1042,1370 1055,1370 1077,1358 1087,1332 1115,1336 1133,1347 1145,1362 1162,1370 1228,1370 1242,1380 1280,1378 1318,1384 1330,1391 1339,1408 1520,1405 1535,1399 1568,1398 ' +
  '1598,1397 1630,1379 1636,1340 1648,1331 1660,1332 1680,1325 1690,1334 1716,1330 1736,1290 1746,1290 1754,1279 1768,1280 1780,1255 1793,1270 1806,1290 1825,1317 1853,1323 1973,1328 1973,1315 1990,1335 1998,1336 2008,1350 2023,1359 2046,1361 2056,1370 2088,1371 2108,1361 2168,1358 2190,1360 2208,1368 2268,1370 2273,1360 2286,1358 2303,1341 2353,1317 2355,1310 2398,1306 2418,1295 2463,1300 2468,1293 2493,1288 2513,1262 2523,1260 2530,1248 2560,1247 2588,1233 2616,1231 2628,1221 2673,1207 2678,1148 2698,1147 2711,1133 2723,1102 2736,1101 2746,1093 2763,1097 2780,1064 2790,1063 2798,1055 2811,1065 2818,1078 2836,1098 2845,1120 2858,1122 2866,1109 2878,1121 2890,1112 2903,1121 2943,1121 2946,1115 2956,1134 3018,1136'

const GRID_LINES = Array.from({ length: 13 }, (_, i) => ({ value: i * 100, y: 560 - i * 38.85 }))

const KM_TICKS = [
  { x: 253, label: '1.0km', color: '#d9d9d9' },
  { x: 453, label: '2.0km', color: '#000' },
  { x: 653, label: '3.0km', color: '#000' },
  { x: 853, label: '4.0km', color: '#000' },
  { x: 1053, label: '5.0km', color: '#000' },
  { x: 1252, label: '6.0km', color: '#000' },
]

function ProfileChart() {
  return (
    <svg viewBox="0 64 1402 536" className="block w-full bg-linear-to-b from-[#e9e9e9] to-[#fefefe]" role="img" aria-label="고도와 속도 그래프">
      <defs>
        <linearGradient id="elevation" x1="0" y1="0" x2="0" y2="1">
          <stop offset="0" stopColor="#fff01f" />
          <stop offset="0.45" stopColor="#fdbd42" />
          <stop offset="0.8" stopColor="#fe9955" />
          <stop offset="1" stopColor="#ff855c" />
        </linearGradient>
        <linearGradient id="header-shadow" x1="0" y1="0" x2="0" y2="1">
          <stop offset="0" stopOpacity="0.22" />
          <stop offset="1" stopOpacity="0" />
        </linearGradient>
      </defs>
      <rect y="64" width="1402" height="22" fill="url(#header-shadow)" />

      <g transform="scale(0.44706 0.38265)">
        <polygon points={`${ELEVATION} 3018,1464 122,1464`} fill="url(#elevation)" />
      </g>
      {GRID_LINES.map(({ value, y }) => (
        <path key={value} d={`M53 ${y}H1350`} stroke="#c9c9c9" strokeOpacity="0.6" strokeWidth="2" />
      ))}
      <g transform="scale(0.44706 0.38265)" fill="none">
        <polyline points={`122,1464 ${ELEVATION}`} stroke="#111" strokeWidth="1.5" vectorEffect="non-scaling-stroke" />
        <polyline points={SPEED_LINE} stroke="#4c78c2" strokeWidth="2" vectorEffect="non-scaling-stroke" />
      </g>
      <path d="M1350 82V561H53" fill="none" stroke="#c8c8c8" strokeWidth="2" />

      <g fontSize="21" fill="#000">
        {GRID_LINES.filter((l) => l.value % 200 === 0).map(({ value, y }) => (
          <text key={value} x="51" y={y} textAnchor="end">
            {value}
          </text>
        ))}
        {KM_TICKS.map(({ x, label, color }) => (
          <g key={label}>
            <path d={`M${x} 554V560`} stroke={color} strokeWidth="2" />
            <text x={x} y="582" textAnchor="end">
              {label}
            </text>
          </g>
        ))}
        <svg x="1316" y="562" width="63" height="26">
          <text x="0" y="20">6.50km</text>
        </svg>
        <text x="1353" y="93">10</text>
        <text x="1366" y="560">0</text>
        <text x="68" y="96" fill="#cc0000">고도(m)</text>
        <text x="1336" y="96" textAnchor="end" fill="#00009c">속도(km/h)</text>
      </g>

      {/* Signature */}
      <text x="994" y="584" fontSize="54" fill="#fff" className="font-['Noto_Sans_CJK_KR',sans-serif] drop-shadow-[2px_2px_0_#222]">
        어리버리 산행~
      </text>
    </svg>
  )
}

export default function App() {
  return (
    <main className="bg-white font-[Roboto,'Noto_Sans_CJK_KR',sans-serif]">
      <div className="grid grid-cols-[670fr_732fr]">
        <Summary />
        <MapPanel />
      </div>
      <section>
        <TitleBar title="속도/고도 상세정보" size="text-[27px]" height="h-16" />
        <ProfileChart />
      </section>
    </main>
  )
}
